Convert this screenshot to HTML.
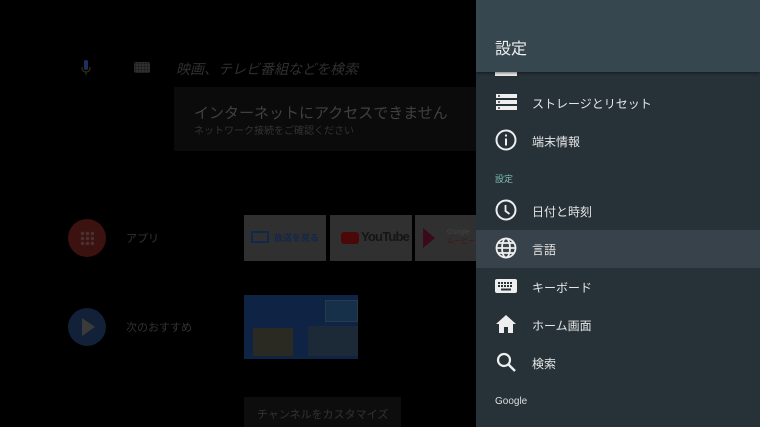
<!DOCTYPE html>
<html><head><meta charset="utf-8"><style>
*{margin:0;padding:0;box-sizing:border-box}
body{width:760px;height:427px;background:#000;position:relative;overflow:hidden;font-family:"Liberation Sans","Noto Sans CJK JP",sans-serif}
.a{position:absolute}
.panel{position:absolute;left:476px;top:0;width:284px;height:427px;background:#263238}
.hdr{position:absolute;left:0;top:0;width:284px;height:72px;background:#37474f;box-shadow:0 1px 3px rgba(0,0,0,.5);z-index:2}
.hdr span{position:absolute;left:19px;top:35px;color:#eee;font-size:16px}
.row{position:absolute;left:0;width:284px;height:38px}
.row svg{position:absolute;left:19px;top:7px}
.row span{position:absolute;left:56px;top:11px;font-size:12px;color:#e6e6e6}
.sec{position:absolute;left:19px;font-size:9px;color:#7fbfb5}
</style></head><body>
<div class="a" style="left:81px;top:58px;width:10px;height:20px">
<svg width="10" height="20" viewBox="0 0 10 20"><rect x="3" y="2" width="4" height="10" rx="2" fill="#1c2f5e"/><path d="M1 9q0 5 4 5q4 0 4-5" stroke="#3a2a10" stroke-width="1.2" fill="none"/><line x1="5" y1="14" x2="5" y2="17" stroke="#153a1c" stroke-width="1.2"/></svg></div>
<div class="a" style="left:134px;top:62px;width:16px;height:11px;background:#303030;border-radius:2px;background-image:radial-gradient(circle,#1a1a1a .8px,transparent 1px);background-size:3px 3px"></div>
<div class="a" style="left:176px;top:59px;font-size:14px;font-style:italic;color:#303030">映画、テレビ番組などを検索</div>
<div class="a" style="left:174px;top:87px;width:302px;height:64px;background:#0b0b0b"></div>
<div class="a" style="left:194px;top:102px;font-size:15px;color:#404040">インターネットにアクセスできません</div>
<div class="a" style="left:194px;top:122px;font-size:10px;color:#333">ネットワーク接続をご確認ください</div>
<div class="a" style="left:68px;top:219px;width:38px;height:38px;border-radius:50%;background:#3b1210"></div>
<div class="a" style="left:80px;top:231px;width:14px;height:14px;background:radial-gradient(circle,#4a3030 1.5px,transparent 2px) 0 0/5px 5px"></div>
<div class="a" style="left:126px;top:230px;font-size:11px;color:#333">アプリ</div>
<div class="a" style="left:68px;top:308px;width:38px;height:38px;border-radius:50%;background:#122038"></div>
<div class="a" style="left:82px;top:318px;width:0;height:0;border-left:13px solid #3a3a3a;border-top:9px solid transparent;border-bottom:9px solid transparent"></div>
<div class="a" style="left:126px;top:319px;font-size:11px;color:#333">次のおすすめ</div>
<div class="a" style="left:244px;top:215px;width:82px;height:46px;background:#303030"></div>
<div class="a" style="left:251px;top:231px;width:18px;height:12px;border:2px solid #12284a"></div>
<div class="a" style="left:274px;top:231px;font-size:9px;font-weight:bold;color:#12284a">放送を見る</div>
<div class="a" style="left:330px;top:215px;width:82px;height:46px;background:#303030"></div>
<div class="a" style="left:341px;top:232px;width:18px;height:12px;background:#4a0808;border-radius:3px"></div>
<div class="a" style="left:361px;top:229px;font-size:13px;font-weight:bold;color:#151515;letter-spacing:-.8px">YouTube</div>
<div class="a" style="left:415px;top:215px;width:61px;height:46px;background:#303030"></div>
<div class="a" style="left:423px;top:228px;width:0;height:0;border-left:12px solid #3a0a18;border-top:10px solid transparent;border-bottom:10px solid transparent"></div>
<div class="a" style="left:447px;top:229px;font-size:7px;color:#444">Google<br><span style="color:#4a1010">ムービー</span></div>
<div class="a" style="left:244px;top:295px;width:114px;height:64px;background:#0f2345"></div>
<div class="a" style="left:325px;top:300px;width:33px;height:22px;background:#16304a;border:1px solid #2a3a4a"></div>
<div class="a" style="left:308px;top:326px;width:50px;height:30px;background:#1c2a38"></div>
<div class="a" style="left:253px;top:328px;width:40px;height:28px;background:#2a2a22"></div>
<div class="a" style="left:244px;top:397px;width:157px;height:30px;background:#0d0d0d"></div>
<div class="a" style="left:257px;top:406px;font-size:11px;color:#333">チャンネルをカスタマイズ</div>

<div class="panel">
<div class="hdr"><span>設定</span></div>
<div class="a" style="left:19px;top:72px;width:22px;height:4px;background:#eee"></div>
<div class="row" style="top:84px"><svg width="22" height="22" viewBox="0 0 22 22"><rect x="1" y="3" width="21" height="4" fill="#eee"/><rect x="1" y="9" width="21" height="4" fill="#eee"/><rect x="1" y="15" width="21" height="4" fill="#eee"/><rect x="3" y="4.3" width="2" height="1.4" fill="#263238"/><rect x="3" y="10.3" width="2" height="1.4" fill="#263238"/><rect x="3" y="16.3" width="2" height="1.4" fill="#263238"/></svg><span>ストレージとリセット</span></div>
<div class="row" style="top:122px"><svg width="22" height="22" viewBox="0 0 22 22"><circle cx="11" cy="11" r="9.5" stroke="#eee" stroke-width="2" fill="none"/><rect x="10" y="9.5" width="2" height="7" fill="#eee"/><rect x="10" y="5.5" width="2" height="2" fill="#eee"/></svg><span>端末情報</span></div>
<div class="sec" style="top:172px">設定</div>
<div class="row" style="top:192px"><svg width="22" height="22" viewBox="0 0 22 22"><circle cx="11" cy="11" r="9.5" stroke="#eee" stroke-width="2" fill="none"/><path d="M10.5 6v6l4 3" stroke="#eee" stroke-width="1.8" fill="none"/></svg><span>日付と時刻</span></div>
<div class="row" style="top:230px;background:#37424a"><svg width="22" height="22" viewBox="0 0 22 22"><g stroke="#eee" stroke-width="1.8" fill="none"><circle cx="11" cy="11" r="9.5"/><ellipse cx="11" cy="11" rx="4" ry="9.5"/><line x1="1.5" y1="11" x2="20.5" y2="11"/><line x1="3" y1="6" x2="19" y2="6"/><line x1="3" y1="16" x2="19" y2="16"/></g></svg><span>言語</span></div>
<div class="row" style="top:268px"><svg width="22" height="22" viewBox="0 0 22 22"><rect x="0" y="4" width="22" height="14" rx="2" fill="#eee"/><g fill="#263238"><rect x="3" y="7" width="2" height="2"/><rect x="6" y="7" width="2" height="2"/><rect x="9" y="7" width="2" height="2"/><rect x="12" y="7" width="2" height="2"/><rect x="15" y="7" width="2" height="2"/><rect x="3" y="10" width="2" height="2"/><rect x="6" y="10" width="2" height="2"/><rect x="9" y="10" width="2" height="2"/><rect x="12" y="10" width="2" height="2"/><rect x="15" y="10" width="2" height="2"/><rect x="6" y="13.5" width="10" height="2"/></g></svg><span>キーボード</span></div>
<div class="row" style="top:306px"><svg width="22" height="22" viewBox="0 0 22 22"><path d="M11 2L1 11h3v9h5v-6h4v6h5v-9h3z" fill="#eee"/></svg><span>ホーム画面</span></div>
<div class="row" style="top:344px"><svg width="22" height="22" viewBox="0 0 22 22"><circle cx="9" cy="9" r="6" stroke="#eee" stroke-width="2.2" fill="none"/><line x1="13.5" y1="13.5" x2="20" y2="20" stroke="#eee" stroke-width="2.4"/></svg><span>検索</span></div>
<div class="a" style="left:19px;top:396px;font-size:10px;color:#ddd">Google</div>
</div>
</body></html>
